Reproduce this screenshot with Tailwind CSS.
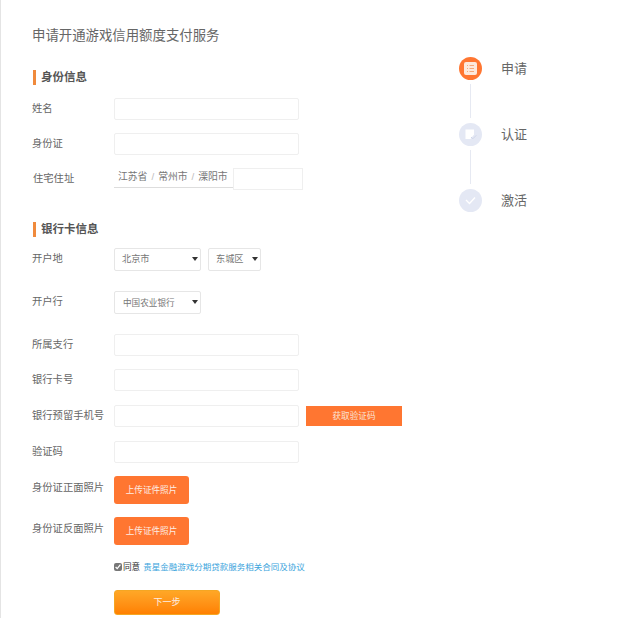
<!DOCTYPE html>
<html lang="zh-CN">

<head>
    <meta charset="UTF-8">
    <title>申请开通游戏信用额度支付服务</title>
    <script src="https://cdn.jsdelivr.net/npm/@tailwindcss/browser@4"></script>
</head>

<body class="bg-white overflow-hidden font-['Liberation_Sans','Noto_Sans_CJK_SC',sans-serif] text-[#666]">
    <div class="flex h-[618px] border-l border-[#e4e4e4]">
        <!-- form -->
        <div class="w-[425px] pl-[32px] shrink-0">
            <h1 class="mt-[27px] h-[17px] leading-[17px] text-[13.4px] font-normal text-[#666] -ml-px">申请开通游戏信用额度支付服务</h1>

            <h2 class="mt-[26px] h-[15px] leading-[15px] border-l-[3px] border-[#f08a3c] pl-[5px] text-[11.5px] font-bold text-[#555]">身份信息</h2>

            <div class="mt-[13px] flex items-center h-[22px] text-[10.3px]">
                <span class="w-[81px] -ml-px mr-px">姓名</span>
                <input class="w-[185px] h-[22px] border border-[#efefef] rounded-[2px] bg-white">
            </div>
            <div class="mt-[13px] flex items-center h-[22px] text-[10.3px]">
                <span class="w-[81px] -ml-px mr-px">身份证</span>
                <input class="w-[185px] h-[22px] border border-[#efefef] rounded-[2px] bg-white">
            </div>
            <div class="mt-[13px] flex items-center h-[22px] text-[10.3px]">
                <span class="w-[81px]">住宅住址</span>
                <div class="w-[119px] h-[20px] border-b border-[#ddd] pl-[4px] flex items-center gap-[4px] -mt-[2px] text-[9.8px] text-[#777]">
                    <span>江苏省</span><span class="text-[#bbb]">/</span><span>常州市</span><span class="text-[#bbb]">/</span><span>溧阳市</span>
                </div>
                <input class="w-[70px] h-[22px] border border-[#efefef] bg-white">
            </div>

            <h2 class="mt-[32px] h-[15px] leading-[15px] border-l-[3px] border-[#f08a3c] pl-[5px] text-[11.5px] font-bold text-[#555]">银行卡信息</h2>

            <div class="mt-[11px] flex items-center h-[23px] text-[10.3px]">
                <span class="w-[81px] -ml-px mr-px -mt-[2px]">开户地</span>
                <div class="w-[87px] h-[23px] border border-[#e6e6e6] rounded-[2px] pl-[7px] pr-[2px] pt-[1px] flex items-center justify-between text-[9.2px] text-[#777]">
                    <span>北京市</span>
                    <span class="w-0 h-0 border-x-[3.5px] border-t-[4px] border-x-transparent border-t-[#333] -mt-[3px]"></span>
                </div>
                <div class="ml-[7px] w-[53px] h-[23px] border border-[#e6e6e6] rounded-[2px] pl-[7px] pr-[2px] pt-[1px] flex items-center justify-between text-[9.2px] text-[#777]">
                    <span>东城区</span>
                    <span class="w-0 h-0 border-x-[3.5px] border-t-[4px] border-x-transparent border-t-[#333] -mt-[3px]"></span>
                </div>
            </div>
            <div class="mt-[20px] flex items-center h-[23px] text-[10.3px]">
                <span class="w-[81px] -ml-px mr-px -mt-[2px]">开户行</span>
                <div class="w-[87px] h-[23px] border border-[#e6e6e6] rounded-[2px] pl-[8px] pr-[2px] pt-[1px] flex items-center justify-between text-[8.6px] text-[#777]">
                    <span>中国农业银行</span>
                    <span class="w-0 h-0 border-x-[3.5px] border-t-[4px] border-x-transparent border-t-[#333] -mt-[3px]"></span>
                </div>
            </div>

            <div class="mt-[20px] flex items-center h-[22px] text-[10.3px]">
                <span class="w-[81px] -ml-px mr-px">所属支行</span>
                <input class="w-[185px] h-[22px] border border-[#efefef] rounded-[2px] bg-white">
            </div>
            <div class="mt-[13px] flex items-center h-[22px] text-[10.3px]">
                <span class="w-[81px] -ml-px mr-px">银行卡号</span>
                <input class="w-[185px] h-[22px] border border-[#efefef] rounded-[2px] bg-white">
            </div>
            <div class="mt-[14px] flex items-center h-[22px] text-[10.3px]">
                <span class="w-[81px] -ml-px mr-px whitespace-nowrap">银行预留手机号</span>
                <input class="w-[185px] h-[22px] border border-[#efefef] rounded-[2px] bg-white">
                <button class="ml-[7px] w-[96px] h-[20px] bg-[#ff7631] text-[#fbe3d6] text-[8.6px]">获取验证码</button>
            </div>
            <div class="mt-[14px] flex items-center h-[22px] text-[10.3px]">
                <span class="w-[81px] -ml-px mr-px">验证码</span>
                <input class="w-[185px] h-[22px] border border-[#efefef] rounded-[2px] bg-white">
            </div>
            <div class="mt-[13px] flex items-center h-[28px] text-[10.3px]">
                <span class="w-[81px] -ml-px mr-px whitespace-nowrap -mt-[5px]">身份证正面照片</span>
                <button class="w-[75px] h-[28px] bg-[#ff7631] rounded-[3px] text-[#fdeee6] text-[8.6px]">上传证件照片</button>
            </div>
            <div class="mt-[13px] flex items-center h-[28px] text-[10.3px]">
                <span class="w-[81px] -ml-px mr-px whitespace-nowrap -mt-[5px]">身份证反面照片</span>
                <button class="w-[75px] h-[28px] bg-[#ff7631] rounded-[3px] text-[#fdeee6] text-[8.6px]">上传证件照片</button>
            </div>
            <div class="mt-[16px] ml-[81px] flex items-center h-[13px] text-[8.6px] whitespace-nowrap">
                <input type="checkbox" checked class="w-[8px] h-[8px] m-0 -mt-[2px] accent-[#777]">
                <span class="ml-[1px] text-[#333]">同意</span>
                <a class="ml-[3px] text-[8.5px] text-[#3aa4dc]">贵星金融游戏分期贷款服务相关合同及协议</a>
            </div>
            <button class="mt-[16px] ml-[81px] block w-[106px] h-[25px] rounded-[3px] border border-[#f5a623] bg-gradient-to-b from-[#ffa726] to-[#ff8000] text-[#fdeee6] text-[9px]">下一步</button>
        </div>

        <!-- steps -->
        <div class="pl-[33px] pt-[57px]">
            <div class="flex items-center gap-[19px]">
                <div class="w-[23px] h-[23px] rounded-full bg-[#ff7631] flex items-center justify-center">
                    <svg width="13" height="13" viewBox="0 0 13 13">
                        <rect width="13" height="13" rx="2" fill="#fde9dc" />
                        <path d="M3 3.500h1M5.500 3.500h4.500M3 6.500h1M5.500 6.500h4.500M3 9.500h1M5.500 9.500h4.500" stroke="#f5a97c" stroke-width="1" />
                    </svg>
                </div>
                <span class="text-[13px] text-[#666]">申请</span>
            </div>
            <div class="ml-[11px] mt-[4px] mb-[5px] w-px h-[34px] bg-[#e6e9f2]"></div>
            <div class="flex items-center gap-[19px]">
                <div class="w-[23px] h-[23px] rounded-full bg-[#e4e8f4] flex items-center justify-center">
                    <svg width="13" height="13" viewBox="0 0 13 13">
                        <path d="M1.500 1.500h8.500v5l-3.500 4.500h-5z" fill="#fff" />
                        <path d="M7 9l1.800 1.800 3.500-3.500" stroke="#cfd6e8" stroke-width="1" fill="none" />
                    </svg>
                </div>
                <span class="text-[13px] text-[#666]">认证</span>
            </div>
            <div class="ml-[11px] mt-[4px] mb-[5px] w-px h-[34px] bg-[#e6e9f2]"></div>
            <div class="flex items-center gap-[19px]">
                <div class="w-[23px] h-[23px] rounded-full bg-[#e4e8f4] flex items-center justify-center">
                    <svg width="11" height="9" viewBox="0 0 11 9">
                        <path d="M1 4l3.500 3.500L10 1.500" stroke="#fff" stroke-width="1.400" fill="none" />
                    </svg>
                </div>
                <span class="text-[13px] text-[#666]">激活</span>
            </div>
        </div>
    </div>
</body>

</html>
